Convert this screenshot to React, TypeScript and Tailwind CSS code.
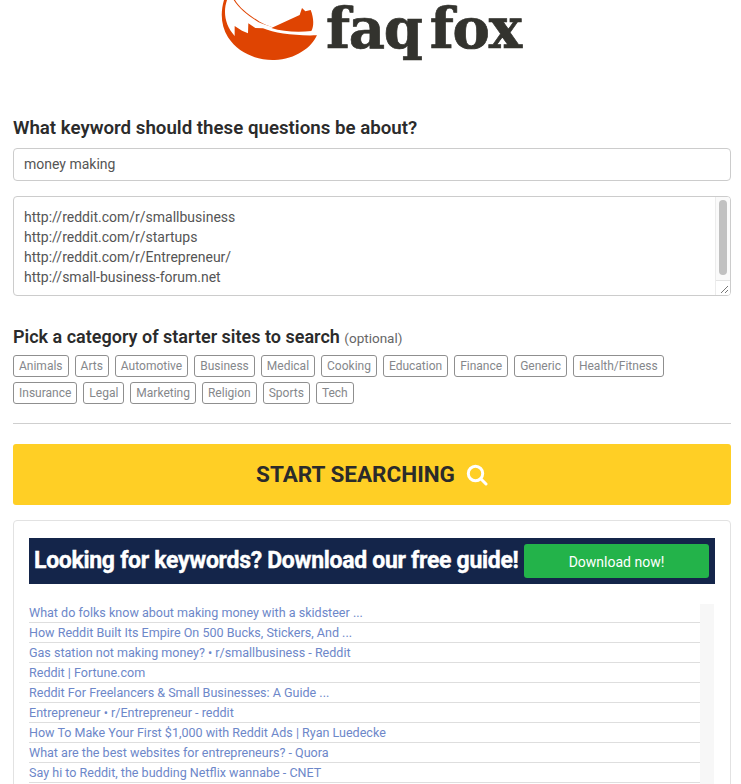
import React from "react";

const row1 = ["Animals", "Arts", "Automotive", "Business", "Medical", "Cooking", "Education", "Finance", "Generic", "Health/Fitness"];
const row2 = ["Insurance", "Legal", "Marketing", "Religion", "Sports", "Tech"];
const results = [
  "What do folks know about making money with a skidsteer ...",
  "How Reddit Built Its Empire On 500 Bucks, Stickers, And ...",
  "Gas station not making money? • r/smallbusiness - Reddit",
  "Reddit | Fortune.com",
  "Reddit For Freelancers & Small Businesses: A Guide ...",
  "Entrepreneur • r/Entrepreneur - reddit",
  "How To Make Your First $1,000 with Reddit Ads | Ryan Luedecke",
  "What are the best websites for entrepreneurs? - Quora",
  "Say hi to Reddit, the budding Netflix wannabe - CNET",
];

function Fox() {
  return (
    <svg width="104" height="64" viewBox="0 0 312 192" className="block shrink-0">
      <path d="M18 0 C6 40 10 80 30 112 C60 158 115 182 170 180 C232 178 282 142 297 105 C230 100 165 88 125 65 C95 47 66 25 51 0 Z" fill="#df4402" />
      <path d="M27 0 C15 35 20 75 50 108 L50 78 L72 92 L90 100 L91 70 L112 84 L135 85 C170 100 230 108 297 106 L297 101 C230 98 165 85 122 67 C92 48 62 25 47 0 Z" fill="#ffffff" />
      <path d="M160 84 L245 45 L252 24 L262 34 L278 30 C288 55 288 80 280 93 C240 98 195 95 160 84 Z" fill="#df4402" />
    </svg>
  );
}

function Tag({ label }: { label: string }) {
  return (
    <span className="h-[22px] border border-[#8f8f8f] rounded-[3px] px-[5px] flex items-center text-[12px] text-[#85878b] leading-none whitespace-nowrap">
      {label}
    </span>
  );
}

export default function App() {
  return (
    <div className="w-[741px] h-[784px] overflow-hidden bg-white px-[13px] pr-[10px] text-[#333] font-['Roboto',sans-serif]">
      <header className="h-[118px] flex items-start pl-[205px]">
        <Fox />
        <span className="ml-[4px] font-['DejaVu_Serif',serif] font-bold text-[56px] leading-[56px] tracking-[-1.3px] [word-spacing:-10px] [-webkit-text-stroke:0.7px_#33332e] text-[#33332e] whitespace-nowrap">
          faq fox
        </span>
      </header>

      <h2 className="text-[18.7px] leading-[20px] font-semibold text-[#2b2b2b]">What keyword should these questions be about?</h2>

      <div className="mt-[10px] h-[33px] border border-[#cccccc] rounded-[4px] px-[10px] flex items-center text-[14px] text-[#555]">
        money making
      </div>

      <div className="mt-[15px] h-[100px] border border-[#cccccc] rounded-[4px] flex overflow-hidden">
        <div className="flex-1 pl-[10px] pt-[10px] text-[14px] leading-[20px] text-[#555]">
          <div>http://reddit.com/r/smallbusiness</div>
          <div>http://reddit.com/r/startups</div>
          <div>http://reddit.com/r/Entrepreneur/</div>
          <div>http://small-business-forum.net</div>
        </div>
        <div className="w-[15px] flex flex-col border-l border-[#ececec] bg-[#fafafa]">
          <div className="flex-1 px-[3px] pt-[3px]">
            <div className="h-[75px] w-[8px] rounded-full bg-[#c1c1c1]" />
          </div>
          <div className="h-[15px] border-t border-[#e4e4e4] bg-white">
            <svg width="14" height="14" viewBox="0 0 14 14" className="block">
              <path d="M5 12 L12 5 M9 12 L12 9" stroke="#777" strokeWidth="1" fill="none" />
            </svg>
          </div>
        </div>
      </div>

      <h2 className="mt-[31px] text-[18px] leading-[20px] font-semibold text-[#2b2b2b]">
        Pick a category of starter sites to search{" "}
        <span className="text-[13.5px] font-normal text-[#666]">(optional)</span>
      </h2>

      <div className="mt-[7px] flex gap-[6px]">
        {row1.map((t) => <Tag key={t} label={t} />)}
      </div>
      <div className="mt-[5px] flex gap-[6px]">
        {row2.map((t) => <Tag key={t} label={t} />)}
      </div>

      <div className="mt-[19px] h-px bg-[#cfcfcf]" />

      <div className="mt-[20px] h-[61px] bg-[#ffcf25] rounded-[3px] flex items-center justify-center gap-[11px]">
        <span className="text-[22.5px] font-bold text-[#2b2b2b] leading-none">START SEARCHING</span>
        <svg width="22" height="22" viewBox="0 0 22 22" fill="none" stroke="#fff" strokeWidth="3">
          <circle cx="9.5" cy="9.5" r="7.2" />
          <path d="M14.8 14.8 L20 20" strokeLinecap="round" />
        </svg>
      </div>

      <div className="mt-[15px] h-[300px] border border-[#e2e2e2] rounded-[4px] px-[15px] pt-[17px]">
        <div className="h-[46px] bg-[#14254a] flex items-center pl-[5px] pr-[6px] justify-between">
          <span className="text-[23px] font-bold text-white tracking-[-0.3px] [-webkit-text-stroke:0.4px_white] whitespace-nowrap">Looking for keywords? Download our free guide!</span>
          <span className="w-[185px] h-[34px] shrink-0 bg-[#23b34a] rounded-[3px] flex items-center justify-center pt-[2px] text-[14px] text-white">Download now!</span>
        </div>
        <div className="mt-[19px] flex">
          <ul className="w-[671px]">
            {results.map((r) => (
              <li key={r} className="h-[20px] border-b border-[#dedede] text-[12.55px] leading-[20px] text-[#6d87c9] whitespace-nowrap">
                {r}
              </li>
            ))}
          </ul>
          <div className="mt-[1px] w-[14px] h-[200px] bg-[#f7f7f7]" />
        </div>
      </div>
    </div>
  );
}
